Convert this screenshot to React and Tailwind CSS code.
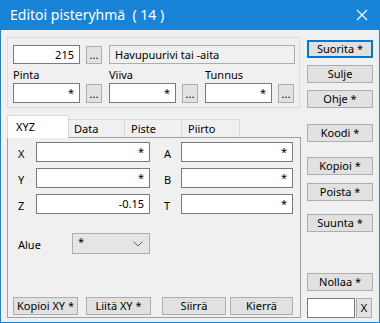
import React from "react";

const F = { fontFamily: '"Noto Sans", "Segoe UI", sans-serif' };

function Btn({ children, className = "" }) {
  return (
    <div className={`flex items-center justify-center bg-[#e1e1e1] border border-[#adadad] text-[11px] leading-[14px] text-black ${className}`}>
      {children}
    </div>
  );
}

function Input({ value = "*", className = "" }) {
  return (
    <div className={`flex items-center justify-end bg-white border border-[#7a7a7a] pr-[5px] text-[11px] leading-[14px] text-black ${className}`}>
      {value}
    </div>
  );
}

function Dots({ className = "" }) {
  return (
    <div className={`flex items-end justify-center bg-[#e1e1e1] border border-[#adadad] w-[16px] h-[18px] text-[11px] leading-[14px] pb-[1px] text-black ${className}`}>
      ...
    </div>
  );
}

function LabeledField({ label, className = "" }) {
  return (
    <div className={`flex flex-col ${className}`}>
      <div className="h-[19px] flex items-end text-[11px] leading-[14px] pb-[1px]">{label}</div>
      <div className="flex items-start">
        <Input className="w-[67px] h-[20px]" />
        <Dots className="ml-[6px] mt-[1px] h-[19px]" />
      </div>
    </div>
  );
}

export default function App() {
  return (
    <div style={F} className="w-[380px] h-[323px] bg-[#1883d7] px-px pb-px flex flex-col text-black">
      {/* Title bar */}
      <div className="h-[30px] flex items-center justify-between pl-[9px] pr-[10px] text-white">
        <div className="text-[14px] leading-[18px] whitespace-pre">Editoi pisteryhmä  ( 14 )</div>
        <svg width="12" height="12" viewBox="0 0 12 12" className="mr-[1px]">
          <path d="M1 1 L11 11 M11 1 L1 11" stroke="white" strokeWidth="1.1" />
        </svg>
      </div>
      {/* Body */}
      <div className="flex-1 bg-[#f0f0f0] flex">
        {/* Left column */}
        <div className="ml-[6px] mt-[7px] w-[294px] flex flex-col">
          {/* Group box */}
          <div className="w-[293px] h-[71px] border border-[#dcdcdc] pt-[7px] pl-[5px] flex flex-col">
            <div className="flex items-start">
              <Input value="215" className="w-[67px] h-[19px]" />
              <Dots className="ml-[6px] mt-[1px] h-[18px]" />
              <div className="ml-[7px] w-[186px] h-[19px] border border-[#adadad] bg-[#f0f0f0] flex items-center pl-[5px] text-[11px] leading-[14px]">
                Havupuurivi tai -aita
              </div>
            </div>
            <div className="flex">
              <LabeledField label="Pinta" />
              <LabeledField label="Viiva" className="ml-[7px]" />
              <LabeledField label="Tunnus" className="ml-[7px]" />
            </div>
          </div>
          {/* Tabs */}
          <div className="mt-[7px] flex items-end h-[22px] text-[11px] leading-[14px]">
            <div className="relative z-10 -mb-px w-[62px] h-[23px] bg-white border border-b-0 border-[#d9d9d9] flex items-center pl-[8px] pb-[1px]">
              XYZ
            </div>
            <div className="w-[56px] h-[18px] border-t border-r border-[#d9d9d9] flex items-center pl-[5px]">Data</div>
            <div className="w-[57px] h-[18px] border-t border-r border-[#d9d9d9] flex items-center pl-[6px]">Piste</div>
            <div className="w-[58px] h-[18px] border-t border-r border-[#d9d9d9] flex items-center pl-[6px]">Piirto</div>
          </div>
          {/* Panel */}
          <div className="w-[294px] h-[181px] border border-[#a0a0a0] flex flex-col pt-[4px] pb-[2px] text-[11px] leading-[14px]">
            {[
              ["X", "*", "A"],
              ["Y", "*", "B"],
              ["Z", "-0.15", "T"],
            ].map(([l, v, r], i) => (
              <div key={l} className={`flex items-center h-[20px] ${i > 0 ? "mt-[6px]" : ""}`}>
                <div className="w-[28px] pl-[10px] pt-[3px]">{l}</div>
                <Input value={v} className="w-[114px] h-[20px]" />
                <div className="w-[31px] pl-[14px] pt-[3px]">{r}</div>
                <Input className="w-[112px] h-[20px]" />
              </div>
            ))}
            <div className="flex items-center mt-[19px] h-[21px]">
              <div className="w-[64px] pl-[10px] pt-[2px]">Alue</div>
              <div className="w-[78px] h-[21px] bg-[#e5e5e5] border border-[#adadad] flex items-start justify-between pl-[5px] pr-[6px]">
                <span className="pt-[1px]">*</span>
                <svg width="10" height="6" viewBox="0 0 10 6" className="mt-[7px]">
                  <path d="M0.5 0.5 L5 5 L9.5 0.5" stroke="#606060" strokeWidth="1" fill="none" />
                </svg>
              </div>
            </div>
            <div className="mt-auto flex pl-[5px]">
              <Btn className="w-[65px] h-[18px]">Kopioi XY *</Btn>
              <Btn className="ml-[8px] w-[65px] h-[18px]">Liitä XY *</Btn>
              <Btn className="ml-[11px] w-[64px] h-[18px]">Siirrä</Btn>
              <Btn className="ml-[4px] w-[63px] h-[18px]">Kierrä</Btn>
            </div>
          </div>
        </div>
        {/* Right column */}
        <div className="ml-[6px] w-[66px] flex flex-col">
          <div className="mt-[10px] h-[18px] flex items-center justify-center bg-[#e1e1e1] border-2 border-[#0078d7] text-[11px] leading-[14px]">Suorita *</div>
          <Btn className="mt-[7px] h-[18px]">Sulje</Btn>
          <Btn className="mt-[7px] h-[18px]">Ohje *</Btn>
          <Btn className="mt-[16px] h-[18px]">Koodi *</Btn>
          <Btn className="mt-[15px] h-[18px]">Kopioi *</Btn>
          <Btn className="mt-[8px] h-[18px]">Poista *</Btn>
          <Btn className="mt-[13px] h-[18px]">Suunta *</Btn>
          <Btn className="mt-[41px] h-[18px]">Nollaa *</Btn>
          <div className="mt-[7px] flex">
            <div className="w-[48px] h-[20px] bg-white border border-[#7a7a7a]" />
            <Btn className="ml-[1px] w-[16px] h-[20px]">X</Btn>
          </div>
        </div>
      </div>
    </div>
  );
}
